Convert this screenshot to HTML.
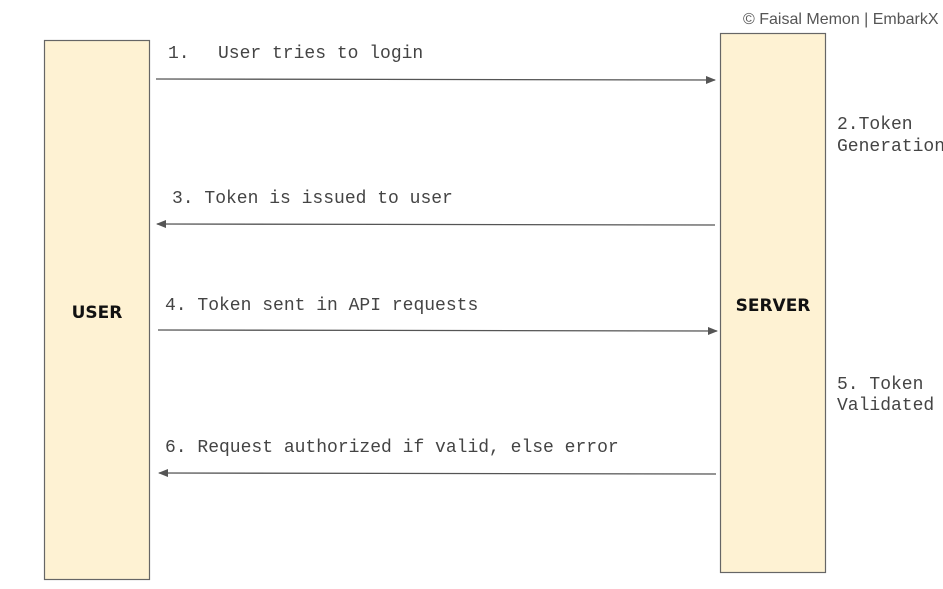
<!DOCTYPE html>
<html><head><meta charset="utf-8"><style>
html,body{margin:0;padding:0;background:#fff;width:943px;height:589px;overflow:hidden}
</style></head><body>
<svg width="943" height="589" xmlns="http://www.w3.org/2000/svg">
<defs><marker id="a" markerWidth="10" markerHeight="8" refX="9" refY="4" orient="auto" markerUnits="userSpaceOnUse"><path d="M0,0 L10,4 L0,8 z" fill="#555"/></marker></defs>
<rect x="44.5" y="40.5" width="105" height="539" fill="#fef2d3" stroke="#666" stroke-width="1.2"/>
<rect x="720.5" y="33.5" width="105" height="539" fill="#fef2d3" stroke="#666" stroke-width="1.2"/>
<text x="97" y="318" text-anchor="middle" font-family="DejaVu Sans,sans-serif" font-weight="bold" font-size="17" fill="#111">USER</text>
<text x="773" y="311" text-anchor="middle" font-family="DejaVu Sans,sans-serif" font-weight="bold" font-size="17" fill="#111">SERVER</text>
<text x="743" y="24" font-family="Liberation Sans,sans-serif" font-size="16" fill="#555">© Faisal Memon | EmbarkX</text>
<g font-family="Liberation Mono,monospace" font-size="18" fill="#444">
<text x="168" y="58">1.</text>
<text x="218" y="58">User tries to login</text>
<text x="172" y="203">3. Token is issued to user</text>
<text x="165" y="310">4. Token sent in API requests</text>
<text x="165" y="452">6. Request authorized if valid, else error</text>
<text x="837" y="129">2.Token</text>
<text x="837" y="151">Generation</text>
<text x="837" y="389">5. Token</text>
<text x="837" y="410">Validated</text>
</g>
<g stroke="#555" stroke-width="1.3" fill="none">
<line x1="156" y1="79" x2="715" y2="80" marker-end="url(#a)"/>
<line x1="715" y1="225" x2="157" y2="224" marker-end="url(#a)"/>
<line x1="158" y1="330" x2="717" y2="331" marker-end="url(#a)"/>
<line x1="716" y1="474" x2="159" y2="473" marker-end="url(#a)"/>
</g>
</svg>
</body></html>
